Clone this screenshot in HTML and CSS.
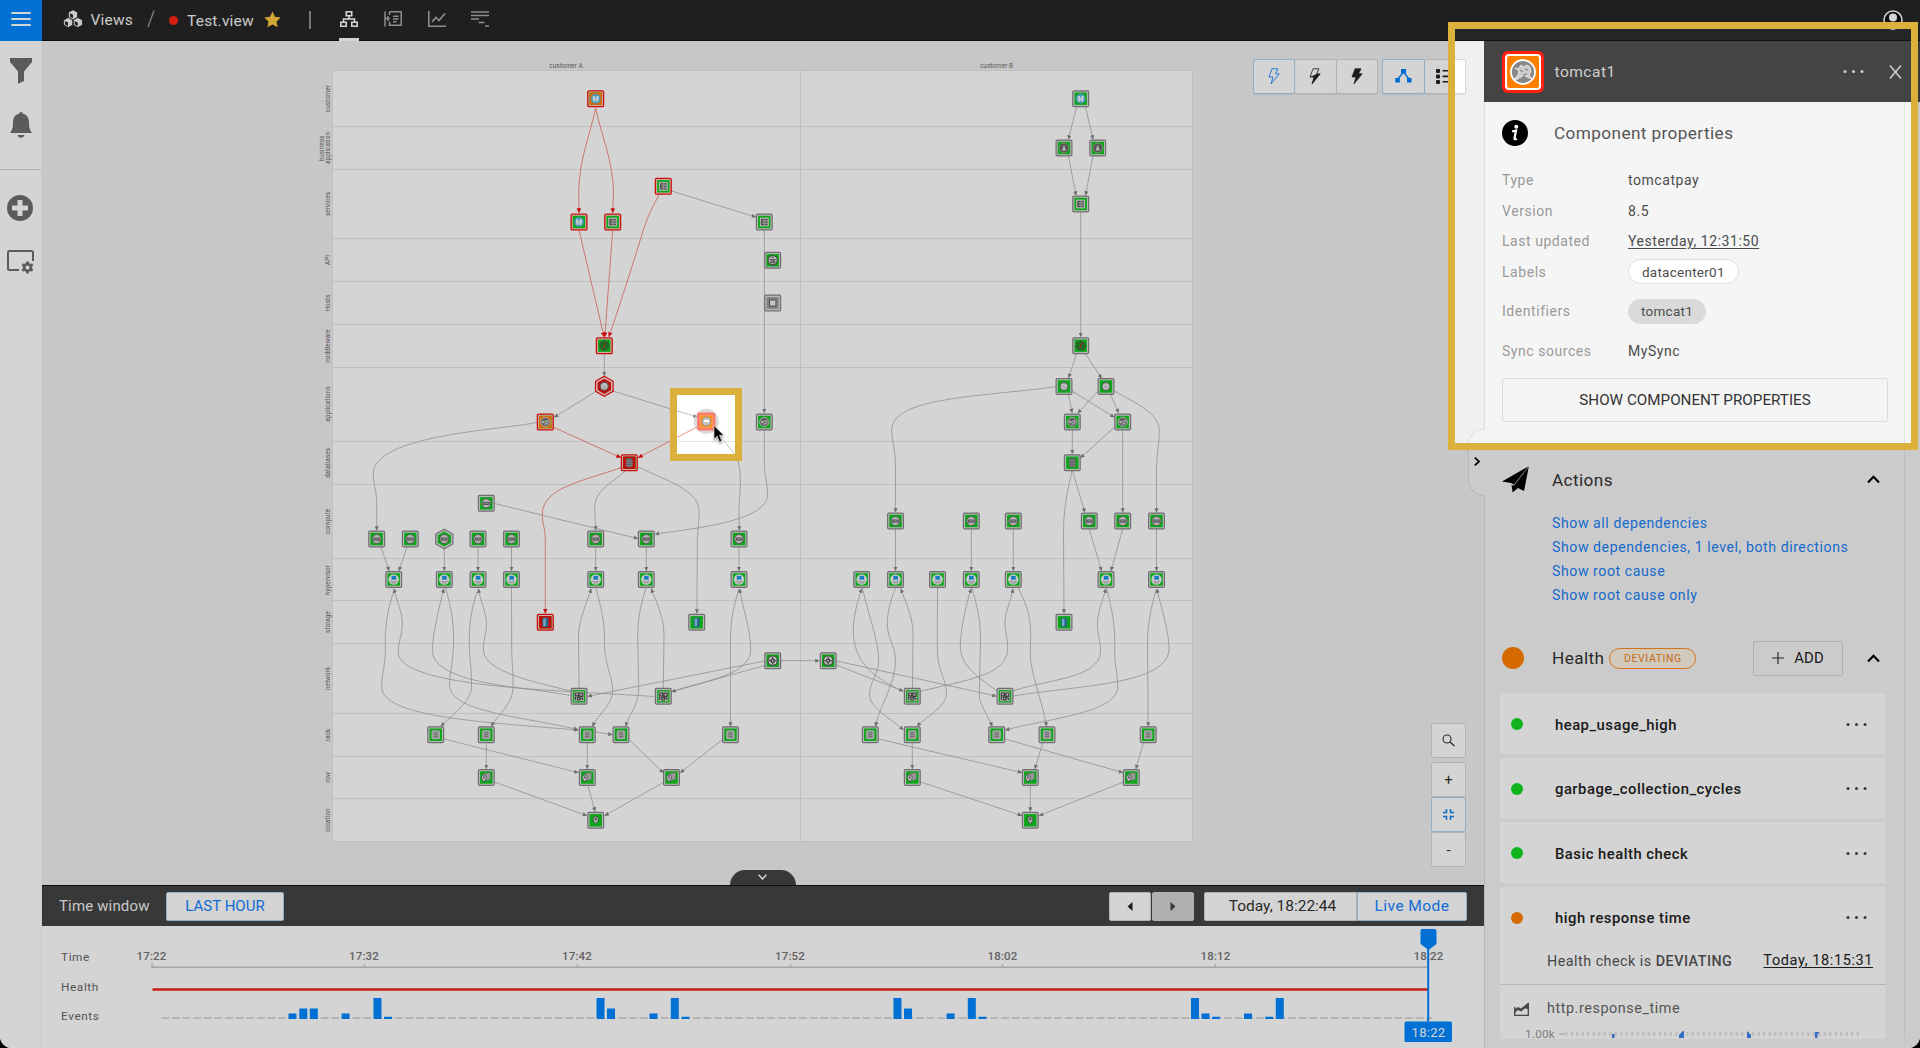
FILE: index.html
```html
<!DOCTYPE html>
<html lang="en">
<head>
<meta charset="utf-8">
<title>Test.view</title>
<link rel="stylesheet" href="styles.css">
</head>
<body>
<div class="app">
  <header class="topbar">
    <button class="menu" aria-label="Menu"><span></span><span></span><span></span></button>
    <svg class="cubes" width="20" height="20" viewBox="0 0 20 20"><g fill="#f4f4f4" stroke="#262626" stroke-width=".8" stroke-linejoin="round"><path d="M10 .8l4.600 2.500v5L10 10.900 5.400 8.300V3.300z"/><path d="M5.200 8.500l4.600 2.500v5l-4.600 2.600-4.600-2.600v-5zM14.800 8.500l4.600 2.500v5l-4.600 2.600-4.600-2.600v-5z"/></g><path d="M7 4.200l3 1.600v3.500L7 7.700zM2 12l3 1.600v3.500L2 15.500zM11.700 12l3 1.600v3.500l-3-1.600z" fill="#262626"/></svg>
    <span class="crumb">Views</span>
    <svg class="slash" width="8" height="18" viewBox="0 0 8 18"><path d="M7 .5L1 17" stroke="#999" stroke-width="1.300"/></svg>
    <i class="crit"></i>
    <span class="crumb view">Test.view</span>
    <svg class="star" width="17" height="17" viewBox="0 0 17 17"><path d="M8.500.5l2.500 5.300 5.700.7-4.200 4 1.100 5.700-5.100-2.800-5.100 2.800 1.100-5.700-4.200-4L6 5.800z" fill="#fdc840"/></svg>
    <i class="sep"></i>
    <nav class="modes">
      <a class="on"><svg width="18" height="16" viewBox="0 0 18 16" fill="none" stroke="#fff" stroke-width="1.600"><path d="M6.300.8h5.400v4H6.300zM.8 11.200h5.400v4H.8zM11.800 11.200h5.400v4h-5.400zM9 5v3M3.500 11V8h11v3"/></svg></a>
      <a><svg width="18" height="16" viewBox="0 0 18 16" fill="none" stroke="#aaa" stroke-width="1.500"><path d="M5.500.8h11.700v13.400H5.500V10.500M5.500.8V4M1 .5v15M1 7.500h5M3.800 5v5M9 5.300h5.500M9 8h5.500M9 10.700h3.500"/></svg></a>
      <a><svg width="18" height="16" viewBox="0 0 18 16" fill="none" stroke="#aaa" stroke-width="1.600"><path d="M.8 0v15.200H18M4 11l4-4.500 3 3L17 2.500"/></svg></a>
      <a><svg width="18" height="16" viewBox="0 0 18 16" fill="none" stroke="#aaa" stroke-width="1.700"><path d="M0 1h18M0 4.500h18M0 8h8M7.500 11.500h6M14 15h4"/></svg></a>
    </nav>
    <svg class="user" width="20" height="20" viewBox="0 0 20 20"><circle cx="10" cy="10" r="9" fill="#111" stroke="#fff" stroke-width="1.500"/><circle cx="10" cy="7.500" r="4" fill="#fff"/><path d="M3.500 16c1.500-3 4-3.500 6.500-3.500s5 .5 6.500 3.500c-3.500 3-9.500 3-13 0z" fill="#fff"/></svg>
  </header>

  <aside class="rail">
    <svg width="22" height="26" viewBox="0 0 22 26"><path d="M0 0h22v4L14 13.500V23l-6 2.800V13.500L0 4z"/></svg>
    <svg width="22" height="26" viewBox="0 0 22 26"><path d="M11 0c1 0 1.500.7 1.500 1.500C17 2.500 19 6 19 10c0 6 1 8.500 3 11H0c2-2.500 3-5 3-11 0-4 2-7.500 6.500-8.500C9.500.7 10 0 11 0zM7.500 23h7c-.5 1.700-1.700 2.800-3.500 2.800S8 24.700 7.500 23z"/></svg>
    <hr>
    <svg width="26" height="26" viewBox="0 0 26 26"><path fill-rule="evenodd" d="M13 0a13 13 0 100 26 13 13 0 000-26zM10.500 5h5v5.500H21v5h-5.500V21h-5v-5.500H5v-5h5.500z"/></svg>
    <svg width="27" height="24" viewBox="0 0 27 24"><path d="M12 20H2.500Q1 20 1 18.500v-16Q1 1 2.500 1h22Q26 1 26 2.500V11" fill="none" stroke="#6e6e6e" stroke-width="2"/><circle cx="20.500" cy="17.500" r="3.500" fill="none" stroke="#6e6e6e" stroke-width="2.400"/><path d="M20.500 11.500v12M15.300 14.500l10.400 6M15.300 20.500l10.400-6" stroke="#6e6e6e" stroke-width="2.600"/><circle cx="20.500" cy="17.500" r="2" fill="#fff"/></svg>
  </aside>

  <main class="canvas">
    <svg class="topology" width="1441" height="844" viewBox="42 41 1441 844">
      <defs>
        <marker id="ag" viewBox="0 0 6 6" refX="5" refY="3" markerWidth="4.600" markerHeight="4.600" markerUnits="userSpaceOnUse" orient="auto"><path d="M0 .3L6 3 0 5.700z" fill="#858585"/></marker>
        <marker id="ar" viewBox="0 0 6 6" refX="5" refY="3" markerWidth="5" markerHeight="5" markerUnits="userSpaceOnUse" orient="auto"><path d="M0 .3L6 3 0 5.700z" fill="#f01010"/></marker>
        <g id="fg"><rect x="-7.900" y="-7.900" width="15.800" height="15.800" rx="1.200" fill="#dcdcdc" stroke="#868686" stroke-width="1.200"/><rect x="-6.200" y="-6.200" width="12.400" height="12.400" fill="#0cc81c"/></g>
        <g id="fr"><rect x="-7.900" y="-7.900" width="15.800" height="15.800" rx="1.200" fill="#ffd0cc" stroke="#f0120c" stroke-width="1.300"/><rect x="-6.200" y="-6.200" width="12.400" height="12.400" fill="#0cc81c"/></g>
        <g id="people"><circle r="4.900" fill="#5cb8dc"/><path d="M-3-2.800h2.400v2.300h1.200v-2.300H3V0L2.300 3H.5V1h-1v2h-1.800L-3 0z" fill="#e8f4fa"/></g>
        <g id="grid"><rect x="-4" y="-4" width="8" height="8" fill="#aaa" stroke="#e4e4e4" stroke-width=".8"/><path d="M-2.700-2.500v5h2.400M-2.500-2.500h2M-2.500 0h2M1-2.500h2M1 0h2M1 2.500h2" stroke="#555" fill="none"/></g>
        <g id="srv"><circle r="4.500" fill="#dcdcdc" stroke="#6c6c6c" stroke-width="1"/><rect x="-3.300" y="-1.500" width="6.600" height="3.200" fill="#666"/><path d="M-2 0h4" stroke="#ccc" stroke-width=".8"/></g>
        <g id="cat"><circle r="4.700" fill="#777" stroke="#ddd" stroke-width=".8"/><path d="M-3.500-1.500l2.500 1L3-2v2.500l-1.500 2H-1L-3 1z" fill="#ddd"/><path d="M-2 1.500L2 0" stroke="#555"/></g>
        <g id="gear"><circle r="4" fill="#e4e4e4" stroke="#666" stroke-width="1"/><path d="M-1.500-.5l3 2" stroke="#999" stroke-width=".9"/></g>
        <g id="mq"><circle r="4.400" fill="#178f25" stroke="#4c5a4c" stroke-width="1.500" stroke-dasharray="3 .8"/><path d="M-1.200 2.600L1.500-2.800" stroke="#c23" stroke-width="1.200"/></g>
        <g id="db"><rect x="-3.400" y="-4.600" width="6.800" height="9.200" rx="1.800" fill="#777"/><path d="M-3.400-2h6.800M-3.400.5h6.800M-3.400 3h6.800" stroke="#aaa" stroke-width=".7"/></g>
        <g id="cyl"><rect x="-3" y="-4.600" width="6" height="9.200" rx="1.400" fill="#2f7da6"/><rect x="-2" y="-3.800" width="2.400" height="7.600" fill="#8cc8e4"/></g>
        <g id="a"><circle r="4.800" fill="#666" stroke="#aaa" stroke-width=".8"/><path d="M-1.900 2.300L0-2.800l1.900 5.100z" fill="#ddd" stroke="#ddd" stroke-width=".4"/></g>
        <g id="n-srv"><use href="#fg"/><use href="#srv"/></g>
        <g id="n-hyp"><use href="#fg"/><circle r="5.200" fill="#f4f4f4"/><path d="M-2.200-3.700h4.600v3.900h-4.600z" fill="#1c96e8"/><path d="M-3.800 1.500q3.800 2 7.600 0M-2.500 3.500h5" stroke="#aaa" stroke-width=".9" fill="none"/></g>
        <g id="n-sw"><use href="#fg"/><rect x="-4.900" y="-4.900" width="9.800" height="9.800" fill="#d4d4d4"/><path d="M-3.600-3.300h3v2.800h-3zM.8-3.300h3V0h-3zM-3.600.5V3.600M-1.500 1h2.600v2.600h-2.600zM1.800 1.800h2M3.600 1.800v2" stroke="#4c4c4c" fill="none" stroke-width="1.200"/></g>
        <g id="n-rack"><use href="#fg"/><rect x="-4.300" y="-4.500" width="8.600" height="9" rx="1.500" fill="#c4c4c4"/><path d="M-2.200-2h4.400M-2.200 0h4.400M-2.200 2h4.400" stroke="#777" stroke-width="1.100"/></g>
        <g id="n-row"><use href="#fg"/><path d="M-2.500-4l6.500-.7v6.500L-1 3.300z" fill="#b8b8b8" stroke="#8a8a8a" stroke-width=".7"/><path d="M-2.500 4.500C-4.500 2-5 1-5-.2a2.500 2.500 0 015 0C0 1-.5 2-2.500 4.500z" fill="#ddd" stroke="#555" stroke-width=".8"/><circle cx="-2.500" cy="-.2" r=".9" fill="#444"/></g>
        <g id="n-loc"><use href="#fg"/><path d="M0 4C-2.200 1.200-2.700 0-2.700-1.200a2.700 2.700 0 015.400 0C2.700 0 2.200 1.200 0 4z" fill="#ccc" stroke="#555" stroke-width=".8"/><circle cy="-1.200" r="1" fill="#444"/></g>
        <g id="n-net"><use href="#fg"/><circle r="4.700" fill="#eee" stroke="#555" stroke-width="1.200"/><path d="M-3.800 0h2.600M1.200 0h2.600M0-3.800v2.600M0 1.200v2.600M-1.400-1.400h2.800v2.800h-2.800z" stroke="#555" stroke-width="1.300" fill="none"/></g>
      </defs>
      <rect x="332.500" y="70.500" width="860" height="771" fill="#fff" stroke="#e6e6e6"/>
      <path class="lanes" d="M333 126.500H1192M333 169.500H1192M333 238.500H1192M333 281.500H1192M333 324.500H1192M333 367.500H1192M333 441.500H1192M333 484.500H1192M333 558.500H1192M333 600.500H1192M333 643.500H1192M333 713.500H1192M333 756.500H1192M333 798.500H1192M800.500 71V841"/>
      <g class="lane-names">
        <text x="566" y="68">customer A</text><text x="996.500" y="68">customer B</text>
        <text transform="translate(329.500 98.500)rotate(-90)">customer</text>
        <text transform="translate(323.500 148.500)rotate(-90)">business</text><text transform="translate(329.500 148)rotate(-90)">application</text>
        <text transform="translate(329.500 204)rotate(-90)">services</text>
        <text transform="translate(329.500 260)rotate(-90)">API</text>
        <text transform="translate(329.500 303)rotate(-90)">Hosts</text>
        <text transform="translate(329.500 346)rotate(-90)">middleware</text>
        <text transform="translate(329.500 404)rotate(-90)">applications</text>
        <text transform="translate(329.500 463)rotate(-90)">databases</text>
        <text transform="translate(329.500 521.500)rotate(-90)">compute</text>
        <text transform="translate(329.500 580)rotate(-90)">hypervisor</text>
        <text transform="translate(329.500 622)rotate(-90)">storage</text>
        <text transform="translate(329.500 678.500)rotate(-90)">network</text>
        <text transform="translate(329.500 735)rotate(-90)">rack</text>
        <text transform="translate(329.500 777.500)rotate(-90)">row</text>
        <text transform="translate(329.500 820)rotate(-90)">location</text>
      </g>

      <g class="edges bad">
        <path d="M595.700 108C590 135 579 160 578.700 192L579 212.500"/><path d="M595.700 108C601 135 613 160 613.500 192L612.700 212.500"/>
        <path d="M579 230L604 336.500"/><path d="M612.700 230L604.800 336.500"/><path d="M659 195Q649 213 645 225C637 250 625 290 609 336.500"/>
        <path d="M553 427L620.500 457.500"/><path d="M698 426.500L638.500 457.500"/>
        <path d="M621.500 467.500C580 482 543 488 542.300 514C542.300 525 545.300 528 545.300 540V613"/>
      </g>
      <g class="edges">
        <path d="M671.500 191L755.500 217"/><path d="M764.300 230V412.500"/><path d="M604.300 354V375.500"/><path d="M595 392L554.500 417"/><path d="M613 391L697 417"/>
        <path d="M537 422.500C500 430 373 435 373.300 474C373.300 486 376.700 490 376.700 503V530"/>
        <path d="M714 430L734 453C741 462 741 480 739.700 497C739 505 739 510 739.300 530"/>
        <path d="M764.300 430V463C764.300 475 767.500 480 767.500 495C767.500 520 700 528 655.500 534"/>
        <path d="M625 471C610 485 595 490 594.700 508C594.700 518 595.500 522 595.800 530"/>
        <path d="M638 467C665 480 700 490 699 512C699 525 697.300 530 697.300 545L696.900 613"/>
        <path d="M494.500 503.500L637.500 538.500"/>
        <path d="M381 547L389 570.500"/><path d="M407 547L399 570.500"/><path d="M444.300 549V570.500"/><path d="M478 547V570.500"/><path d="M511.500 547V570.500"/><path d="M595.700 547V570.500"/><path d="M646.300 547V570.500"/><path d="M739 547V570.500"/>
        <path d="M393.500 592C386 615 385 630 385.300 650C385.500 665 381.500 675 381.700 687C382 717 480 722 578 730"/><path d="M595.700 732L612 734.700"/>
        <path d="M654 696.500C560 690 398 688 398.300 652C398.500 640 402.500 635 402.300 622C402 612 397 602 394 589"/>
        <path d="M570.500 695.500C530 687 432 685 432.300 650C433 630 440 605 443.700 589"/>
        <path d="M445.500 588C452 610 454 625 453.500 645C453 665 449.500 672 449.500 685C450 712 520 716 577.500 729.500"/>
        <path d="M477 592C471 610 469 625 469.300 645C469.700 660 471.700 668 471.500 688C471 700 455 713 441 726"/>
        <path d="M570.500 691C535 682 484 672 483.300 650C483 640 486.800 635 486.500 622C486 612 480 600 478.500 589"/>
        <path d="M511.500 588L511.700 650C512 665 513.500 675 513 688C512 705 500 712 491.500 726"/>
        <path d="M579 688L578.500 635C578.500 620 588 600 591 589"/>
        <path d="M596 588C600 605 605 620 604.500 640C604 665 612.500 675 612.700 690C612.700 705 600 712 592.500 726"/>
        <path d="M646 588C641 605 638 615 637.700 635L638.700 690C638 705 629 715 625.700 726"/>
        <path d="M663.300 688L664 635C664 615 655 600 651.500 589"/>
        <path d="M738.500 590C733 610 730.500 620 730.500 640V726"/>
        <path d="M672 691.500C705 681 750 675 750.700 650C751 630 743 610 739.500 589"/>
        <path d="M764.500 661L588 696.300"/><path d="M764.500 665.500L672 691.500"/><path d="M781 660.700H819"/>
        <path d="M444 739L578 772.500"/><path d="M486.300 743V768.500"/><path d="M587.300 743V768.500"/><path d="M629.500 740L663 772.500"/><path d="M722 740L680.500 772.500"/>
        <path d="M494.500 782L586.500 815.500"/><path d="M588 786L595 811"/><path d="M663.300 782.500L605 815.500"/>

        <path d="M1076.500 107L1068.500 139"/><path d="M1085.500 107L1093 139"/><path d="M1068.500 156L1076 195"/><path d="M1093 156L1085.500 195"/><path d="M1080.700 212V336.500"/><path d="M1076.500 354L1068.700 377.500"/><path d="M1085.500 354L1101.500 378"/>
        <path d="M1056 386.700C980 397 892 397 891.700 430C892 443 895.500 450 895.500 465V512"/>
        <path d="M1068.500 394.500L1072 412.500"/><path d="M1072 391L1114 417"/><path d="M1098 391L1078 413"/><path d="M1110.500 394.500L1118.500 412.500"/>
        <path d="M1114.500 391C1135 403 1158 412 1159.300 430C1159.500 443 1156.500 455 1156.500 468V512"/>
        <path d="M1072.300 430V453.500"/><path d="M1114.500 427L1081 457.500"/><path d="M1122.700 430V512"/><path d="M1072.500 471L1084.700 512"/>
        <path d="M1072 471C1068 490 1063.500 505 1063.500 535L1064 613"/>
        <path d="M895.500 529V570.500"/><path d="M971.300 529V570.500"/><path d="M1013.300 529V570.500"/><path d="M1089.300 529L1101.500 570.500"/><path d="M1122.700 529L1111 570.500"/><path d="M1156.500 529V570.500"/>
        <path d="M902.500 691C870 676 853.300 660 853.300 630C853.500 615 858 600 861.500 589"/>
        <path d="M862.500 588C868 615 879 640 878.700 662C878 675 869.500 682 869.500 695C870 708 890 718 903 729.500"/>
        <path d="M895.500 588C891 600 887 612 887.300 625C888 640 895.500 645 895.500 662C895 685 880 705 875.500 726"/>
        <path d="M912.500 688L913 635C913 615 905 602 901 589"/>
        <path d="M937.500 588L937.300 650C937.500 670 946.500 680 946.500 693C946 708 925 717 917.500 726"/>
        <path d="M997 691C975 675 960 665 960.300 645C961 625 967 602 971 589"/>
        <path d="M972 588C978 610 980.500 620 980.500 640L979.300 695C979.500 705 988 715 992 726"/>
        <path d="M920.700 691.300C965 680 1006 676 1007.700 650C1008 638 1004.500 632 1005 620C1006 610 1011 600 1013 589"/>
        <path d="M1018.500 588C1026 605 1031 615 1030.700 635L1030.300 655C1031 675 1042 700 1046.500 726"/>
        <path d="M1013.300 690.700C1050 679 1099 678 1100.500 652C1101 640 1097 635 1097.500 622C1098 610 1103 600 1105.700 589"/>
        <path d="M1106.700 588C1112 610 1115 625 1114.800 645C1114 665 1117.700 672 1117.700 687C1117 713 1050 718 1005.700 730"/>
        <path d="M1156 590C1150 612 1147.500 625 1147.500 645L1148.200 726"/>
        <path d="M1013.300 696C1080 685 1169 685 1169.200 648C1168 625 1160 605 1157 589"/>
        <path d="M836.500 665L903 691"/><path d="M836.500 661L996 696"/>
        <path d="M878.500 739L1021.500 772.500"/><path d="M912.300 743V768.500"/><path d="M1005 739L1122.500 772.500"/><path d="M1042.700 743L1035 768.500"/><path d="M1143.500 743L1136 768.500"/>
        <path d="M920.500 782L1021.500 815.500"/><path d="M1030.300 786V811"/><path d="M1123.500 782L1039.500 815.500"/>
      </g>

      <g class="nodes">
        <use href="#fr" x="595.700" y="98.700"/><path d="M589.500 92.500h12.400v12.400h-12.400z" fill="#ff8000"/><use href="#people" x="595.700" y="98.700"/>
        <use href="#fr" x="579" y="222"/><use href="#people" x="579" y="222"/>
        <use href="#fr" x="612.700" y="222"/><use href="#grid" x="612.700" y="222"/>
        <use href="#fr" x="663.300" y="186.300"/><use href="#grid" x="663.300" y="186.300"/>
        <use href="#fg" x="764.300" y="222"/><use href="#grid" x="764.300" y="222"/>
        <use href="#fg" x="772.700" y="260.300"/><g transform="translate(772.700 260.300)"><circle r="4.600" fill="#eee" stroke="#555" stroke-width="1.200"/><path d="M-3-.8h6M-2 .5h1.500v2.200H-2zM.7.500h1.500v2.200H.7zM-1-2.800h2" stroke="#555" fill="none"/></g>
        <g transform="translate(772.700 303)"><rect x="-7.900" y="-7.900" width="15.800" height="15.800" rx="1" fill="#dcdcdc" stroke="#868686" stroke-width="1.200"/><rect x="-5.900" y="-5.900" width="11.800" height="11.800" fill="#999"/><rect x="-3.200" y="-3" width="6.400" height="6" fill="#eee" stroke="#666"/></g>
        <use href="#fr" x="604.300" y="345.700"/><use href="#mq" x="604.300" y="345.700"/>
        <g transform="translate(604.300 386.300)"><path d="M0-10l8.800 5V5L0 10-8.800 5V-5z" fill="#ffd8d4" stroke="#f0120c" stroke-width="1.200"/><path d="M0-7.600l6.700 3.800v7.600L0 7.600-6.700 3.800v-7.600z" fill="#e01414"/></g><use href="#gear" x="604.300" y="386.300"/>
        <use href="#fr" x="545.300" y="422"/><path d="M539.100 415.800h12.400v12.400h-12.400z" fill="#ff8000"/><use href="#cat" x="545.300" y="422"/>
        <circle cx="706.300" cy="421.300" r="12.500" fill="#bbb" opacity=".55"/>
        <rect x="698.300" y="413.500" width="16" height="16" rx="1.500" fill="#ff9a6a" stroke="#ff7568" stroke-width="2.200"/><path d="M700.500 415.700h11.600v11.600h-11.600z" fill="#ff9420"/><circle cx="706.300" cy="421.500" r="4.400" fill="#c4c4c4" stroke="#909090"/><path d="M704 421h5" stroke="#fff" stroke-width="2"/>
        <use href="#fg" x="764.300" y="422"/><use href="#cat" x="764.300" y="422"/>
        <use href="#fr" x="629.300" y="462.700"/><path d="M623.100 456.500h12.400v12.400h-12.400z" fill="#e80c0c"/><use href="#db" x="629.300" y="462.700"/>
        <use href="#n-srv" x="486.300" y="503.300"/><use href="#n-srv" x="376.700" y="539"/><use href="#n-srv" x="410.300" y="539"/>
        <g transform="translate(444.300 539)"><path d="M0-9.800l8.600 4.900v9.800L0 9.800-8.600 4.900v-9.800z" fill="#dcdcdc" stroke="#868686" stroke-width="1.200"/><path d="M0-7.600l6.600 3.800v7.600L0 7.600-6.600 3.800v-7.600z" fill="#0cc81c"/></g><use href="#srv" x="444.300" y="539"/>
        <use href="#n-srv" x="478" y="539"/><use href="#n-srv" x="511.500" y="539"/><use href="#n-srv" x="595.700" y="539"/><use href="#n-srv" x="646.300" y="539"/><use href="#n-srv" x="739" y="539"/>
        <use href="#n-hyp" x="393.700" y="579.500"/><use href="#n-hyp" x="444.300" y="579.500"/><use href="#n-hyp" x="478" y="579.500"/><use href="#n-hyp" x="511.500" y="579.500"/><use href="#n-hyp" x="595.700" y="579.500"/><use href="#n-hyp" x="646.300" y="579.500"/><use href="#n-hyp" x="739" y="579.500"/>
        <use href="#fr" x="545.300" y="622.300"/><path d="M539.100 616.100h12.400v12.400h-12.400z" fill="#e80c0c"/><use href="#cyl" x="545.300" y="622.300"/>
        <use href="#fg" x="696.700" y="622.300"/><use href="#cyl" x="696.700" y="622.300"/>
        <use href="#n-net" x="772.700" y="660.700"/><use href="#n-sw" x="579" y="696.300"/><use href="#n-sw" x="663.300" y="696.300"/>
        <use href="#n-rack" x="435.700" y="734.700"/><use href="#n-rack" x="486.300" y="734.700"/><use href="#n-rack" x="587.300" y="734.700"/><use href="#n-rack" x="621" y="734.700"/><use href="#n-rack" x="730.500" y="734.700"/>
        <use href="#n-row" x="486.300" y="777.500"/><use href="#n-row" x="587.300" y="777.500"/><use href="#n-row" x="671.500" y="777.500"/><use href="#n-loc" x="595.700" y="820.300"/>

        <use href="#fg" x="1080.700" y="98.700"/><use href="#people" x="1080.700" y="98.700"/>
        <use href="#fg" x="1064" y="148"/><use href="#a" x="1064" y="148"/><use href="#fg" x="1097.700" y="148"/><use href="#a" x="1097.700" y="148"/>
        <use href="#fg" x="1080.700" y="204"/><use href="#grid" x="1080.700" y="204"/>
        <use href="#fg" x="1080.700" y="345.700"/><use href="#mq" x="1080.700" y="345.700"/>
        <use href="#fg" x="1064" y="386.500"/><use href="#gear" x="1064" y="386.500"/><use href="#fg" x="1106" y="386.500"/><use href="#gear" x="1106" y="386.500"/>
        <use href="#fg" x="1072.300" y="422"/><use href="#cat" x="1072.300" y="422"/><use href="#fg" x="1122.700" y="422"/><use href="#cat" x="1122.700" y="422"/>
        <use href="#fg" x="1072.300" y="462.700"/><use href="#db" x="1072.300" y="462.700"/>
        <use href="#n-srv" x="895.500" y="521"/><use href="#n-srv" x="971.300" y="521"/><use href="#n-srv" x="1013.300" y="521"/><use href="#n-srv" x="1089.300" y="521"/><use href="#n-srv" x="1122.700" y="521"/><use href="#n-srv" x="1156.500" y="521"/>
        <use href="#n-hyp" x="861.700" y="579.500"/><use href="#n-hyp" x="895.500" y="579.500"/><use href="#n-hyp" x="937.500" y="579.500"/><use href="#n-hyp" x="971.300" y="579.500"/><use href="#n-hyp" x="1013.300" y="579.500"/><use href="#n-hyp" x="1106" y="579.500"/><use href="#n-hyp" x="1156.500" y="579.500"/>
        <use href="#fg" x="1064" y="622.300"/><use href="#cyl" x="1064" y="622.300"/>
        <use href="#n-net" x="828.200" y="660.700"/><use href="#n-sw" x="912.300" y="696.300"/><use href="#n-sw" x="1005" y="696.300"/>
        <use href="#n-rack" x="870.300" y="734.700"/><use href="#n-rack" x="912.300" y="734.700"/><use href="#n-rack" x="996.700" y="734.700"/><use href="#n-rack" x="1047" y="734.700"/><use href="#n-rack" x="1148.200" y="734.700"/>
        <use href="#n-row" x="912.300" y="777.500"/><use href="#n-row" x="1030.300" y="777.500"/><use href="#n-row" x="1131.300" y="777.500"/><use href="#n-loc" x="1030.300" y="820.300"/>
      </g>
    </svg>

    <div class="tools">
      <div class="group">
        <button class="sel"><svg width="12" height="17" viewBox="0 0 12 17"><path d="M4 .8h6L7.500 5.800h3.700L3 16l2-7H1z" fill="none" stroke="#1c84ff" stroke-width=".9"/></svg></button>
        <button><svg width="12" height="17" viewBox="0 0 12 17"><path d="M4 .8h6L7.500 5.800h3.700L3 16l2-7H1z" fill="none" stroke="#222" stroke-width=".8"/><path d="M1 9l6.500-3h3.700L3 16l2-7z" fill="#222"/></svg></button>
        <button><svg width="12" height="17" viewBox="0 0 12 17"><path d="M4 .8h6L7.500 5.800h3.700L3 16l2-7H1z" fill="#222" stroke="#222" stroke-width=".7"/></svg></button>
      </div>
      <div class="group">
        <button class="sel"><svg width="17" height="14" viewBox="0 0 17 14"><path d="M6 0h5v4.500H6zM.3 9h4.500v4.500H.3zM12 9h4.500v4.500H12z" fill="#0080ff"/><path d="M8.500 3L2.500 10.500M8.500 3l6 7.500" stroke="#0080ff" stroke-width="1.300"/></svg></button>
        <button><svg width="17" height="15" viewBox="0 0 17 15" fill="#222"><rect width="4" height="4" rx="1"/><rect y="5.500" width="4" height="4" rx="1"/><rect y="11" width="4" height="4" rx="1"/><path d="M6.500 1h10v1.600h-10zM6.500 6.600h10v1.600h-10zM6.500 12h10v1.600h-10z"/></svg></button>
      </div>
    </div>
    <div class="zoomer">
      <button class="find"><svg width="13" height="13" viewBox="0 0 13 13"><circle cx="5" cy="5" r="4" fill="none" stroke="#333" stroke-width="1.100"/><path d="M8 8l4.500 4" stroke="#333" stroke-width="1.300"/></svg></button>
      <button>+</button>
      <button class="sel"><svg width="11" height="11" viewBox="0 0 11 11"><path d="M0 3.500h3.500V0M7.500 0v3.500H11M0 7.500h3.500V11M7.500 11V7.500H11" fill="none" stroke="#1080f0" stroke-width="1.500"/></svg></button>
      <button>-</button>
    </div>
    <div class="collapse"><svg width="9" height="6" viewBox="0 0 9 6"><path d="M.7.700L4.500 5 8.300.7" fill="none" stroke="#fff" stroke-width="1.500"/></svg></div>
    <svg class="cursor" width="12" height="18" viewBox="0 0 12 18"><path d="M1 .5v13.700l3.200-3 2.300 5.800 2.400-1-2.400-5.600H11z" fill="#000" stroke="#fff" stroke-width=".6"/></svg>
  </main>

  <section class="timebar">
    <span class="tw">Time window</span>
    <button class="hour">LAST HOUR</button>
    <div class="step"><button><svg width="6" height="9" viewBox="0 0 6 9"><path d="M5.500 0v9L.5 4.500z" fill="#222"/></svg></button><button class="off"><svg width="6" height="9" viewBox="0 0 6 9"><path d="M.5 0v9l5-4.500z" fill="#444"/></svg></button></div>
    <div class="now"><button class="date">Today, 18:22:44</button><button class="live">Live Mode</button></div>
  </section>
  <section class="timeline">
    <svg width="1441" height="122" viewBox="42 926 1441 122">
      <g class="tl-name"><text x="61" y="961">Time</text><text x="61" y="990.500">Health</text><text x="61" y="1020">Events</text></g>
      <g class="tl-tick"><text x="151.500" y="960">17:22</text><text x="364" y="960">17:32</text><text x="577" y="960">17:42</text><text x="790" y="960">17:52</text><text x="1002.500" y="960">18:02</text><text x="1215.500" y="960">18:12</text><text x="1428.500" y="960">18:22</text></g>
      <path d="M152 963v4.300H1428M364.500 967v-3M577.500 967v-3M790.500 967v-3M1002.500 967v-3M1215.500 967v-3" fill="none" stroke="#c8c8c8" stroke-width="1.400"/>
      <path d="M152.500 989.500H1428" stroke="#ee2418" stroke-width="2.500"/>
      <path d="M161.300 1018H1432" stroke="#dadada" stroke-width="2" stroke-dasharray="7.800 2.830"/>
      <path fill="#0087ff" d="M288.500 1019v-5.500h8v5.500zM299.300 1019v-10.500h8v10.500zM309.800 1019v-10.500h8v10.500zM341.600 1019v-5.500h8v5.500zM373.500 1019v-21h8v21zM384 1019v-2.200h8v2.200zM596.500 1019v-21h8v21zM607 1019v-10.500h8v10.500zM649.500 1019v-5.500h8v5.500zM670.800 1019v-21h8v21zM681.500 1019v-2.200h8v2.200zM893.500 1019v-21h8v21zM904 1019v-10.500h8v10.500zM946.500 1019v-5.500h8v5.500zM967.800 1019v-21h8v21zM978.500 1019v-2.200h8v2.200zM1191 1019v-21h8v21zM1201.500 1019v-5.500h8v5.500zM1212 1019v-2.200h8v2.200zM1244 1019v-5.500h8v5.500zM1265.200 1019v-2.200h8v2.200zM1275.800 1019v-21h8v21z"/>
      <path d="M1422 929h12.500q2 0 2 2v13l-8 6-8-6v-13q0-2 1.500-2z" fill="#0087ff"/><path d="M1428.200 948v75" stroke="#0087ff" stroke-width="2"/>
      <rect x="1404.500" y="1021.500" width="47.500" height="20.500" rx="1.500" fill="#0087ff"/><text class="pin" x="1428.500" y="1036.500">18:22</text>
    </svg>
  </section>

  <aside class="details">
    <div class="grip"><svg width="6" height="9" viewBox="0 0 6 9"><path d="M.8.700L5 4.500.8 8.300" fill="none" stroke="#000" stroke-width="1.700"/></svg></div>
    <div class="d-head">
      <svg width="42" height="42" viewBox="0 0 42 42"><rect width="42" height="42" rx="6" fill="#ff2010"/><rect x="4" y="4" width="34" height="34" rx="3" fill="#ff8000" stroke="#fff" stroke-width="2"/><circle cx="21" cy="21" r="12" fill="#888" stroke="#fff" stroke-width="1.800"/><path d="M13 17l3 1 3-4 3 2 3-2 3 2 1 5-2 3 3 4-5-2-3-2-3 2-5 3-2-1 4-4 1-4z" fill="#ccc" stroke="#f4f4f4" stroke-width=".8"/><path d="M18 19l3 2M23 18l3 1M21 24l4-1" stroke="#777" stroke-width="1"/></svg>
      <span>tomcat1</span>
      <i class="dots"></i>
      <svg class="close" width="13" height="14" viewBox="0 0 13 14"><path d="M1 .5l11 13M12 .5L1 13.500" stroke="#d4d4d4" stroke-width="1.400"/></svg>
    </div>
    <div class="d-body">
      <div class="title props-title"><svg width="26" height="26" viewBox="0 0 26 26"><circle cx="13" cy="13" r="13"/><circle cx="14.300" cy="6.800" r="2" fill="#fff"/><path d="M10 11.500l4-1-1.600 8q0 1.300 2.300.2" fill="none" stroke="#fff" stroke-width="2.200"/></svg><h2>Component properties</h2></div>
      <dl class="props">
        <dt>Type</dt><dd>tomcatpay</dd>
        <dt>Version</dt><dd>8.5</dd>
        <dt>Last updated</dt><dd><u>Yesterday, 12:31:50</u></dd>
        <dt>Labels</dt><dd><span class="tag">datacenter01</span></dd>
        <dt>Identifiers</dt><dd><span class="tag id">tomcat1</span></dd>
        <dt>Sync sources</dt><dd>MySync</dd>
      </dl>
      <button class="show">SHOW COMPONENT PROPERTIES</button>
      <div class="title acts-title"><svg width="27" height="27" viewBox="0 0 27 27"><path d="M0 15.500L26.500.3 12 18.500 9 17zM12 19.500L26.800.8 22 25l-6-3-5.300 4.500L9.500 19z"/></svg><h2>Actions</h2><svg class="chev" width="13" height="9" viewBox="0 0 13 9"><path d="M1 7.500l5.500-5.700L12 7.500" fill="none" stroke="#000" stroke-width="2.200"/></svg></div>
      <ul class="links"><li>Show all dependencies</li><li>Show dependencies, 1 level, both directions</li><li>Show root cause</li><li>Show root cause only</li></ul>
      <div class="title health-title"><i class="state"></i><h2>Health</h2><span class="badge">DEVIATING</span><button class="add"><svg width="12" height="14" viewBox="0 0 12 14"><path d="M6 1v12M0 7h12" stroke="#333" stroke-width="1.200"/></svg>ADD</button><svg class="chev" width="13" height="9" viewBox="0 0 13 9"><path d="M1 7.500l5.500-5.700L12 7.500" fill="none" stroke="#000" stroke-width="2.200"/></svg></div>
      <div class="cards">
        <div class="card"><i></i><b>heap_usage_high</b><i class="dots"></i></div>
        <div class="card"><i></i><b>garbage_collection_cycles</b><i class="dots"></i></div>
        <div class="card"><i></i><b>Basic health check</b><i class="dots"></i></div>
        <div class="big">
          <div class="card dev"><i></i><b>high response time</b><i class="dots"></i></div>
          <div class="msg"><span>Health check is <strong>DEVIATING</strong></span><u>Today, 18:15:31</u></div>
          <div class="metric"><svg width="15" height="14" viewBox="0 0 15 14"><path d="M.7 5v8.300h13.600V1" fill="none" stroke="#555" stroke-width="1.300"/><path d="M1 7l3-2 3 1.500L14.500.5V7l-4-.5-3 3-4-1.500L1 11z" fill="#555"/></svg><span>http.response_time</span></div>
          <div class="chart"><span>1.00k</span><svg width="304" height="8" viewBox="0 0 304 8"><path d="M0 4h6" stroke="#bbb"/><path d="M6 3h294M6 5h294" stroke="#ccc" stroke-dasharray="2.500 3"/><path d="M53 4h2.500v4H53zM120 5l4-4h1v7h-5zM188 1l4 4v3h-4zM256 2h4v1.500h-1.500V8H256z" fill="#3c84f0"/></svg></div>
        </div>
      </div>
    </div>
  </aside>
  <div class="dim"></div>
  <div class="focus focus-node"></div>
  <div class="focus focus-panel"></div>
</div>
</body>
</html>
```
FILE: styles.css
```css
* { box-sizing: border-box; }
body { margin: 0; background: #000; font-family: Roboto, "Liberation Sans", sans-serif; color: #333; }
button { font: inherit; color: inherit; background: #fff; border: 1px solid #d8d8d8; border-radius: 2px; padding: 0; display: flex; align-items: center; justify-content: center; }
svg { display: block; flex: none; }
h2, dl, dd, ul { margin: 0; padding: 0; }
.app {
  position: relative; width: 1920px; height: 1048px; overflow: hidden;
  border-radius: 0 0 12px 12px; background: #fff;
  display: grid; grid-template: 41px 844px 41px 122px / 42px 1442px 436px;
}

/* top bar */
.topbar { grid-column: 1 / 4; background: #262626; color: #f2f2f2; display: flex; align-items: center; padding-bottom: 3px; border-bottom: 1px solid #111; }
.menu { width: 42px; height: 41px; margin-bottom: -4px; background: #0087ff; border: 0; border-radius: 0; flex-direction: column; gap: 3.500px; padding-bottom: 3px; }
.menu span { width: 20px; height: 2.500px; background: #fff; border-radius: 1px; }
.cubes { margin-left: 21px; }
.crumb { margin-left: 7.500px; font-size: 15.500px; letter-spacing: .2px; line-height: 20px; padding-top: 2px; }
.slash { margin-left: 14px; }
.crit { width: 9px; height: 9px; border-radius: 50%; background: #ff2414; margin: 4px 0 0 14px; }
.view { margin-left: 9px; padding-top: 4px; }
.star { margin-left: 10.500px; margin-top: 2px; }
.sep { width: 2px; height: 18px; background: #909090; margin: 3px 0 0 28px; }
.modes { display: flex; gap: 23.500px; margin-left: 27.500px; align-self: stretch; }
.modes a { width: 20.300px; display: flex; justify-content: center; align-items: center; margin-bottom: -4px; border-bottom: 3px solid transparent; }
.modes .on { border-color: #fff; }
.user { margin-left: auto; margin-right: 17px; margin-top: 2px; }

/* left rail */
.rail { grid-row: 2 / 5; background: #fff; border-right: 1px solid #f2f2f2; display: flex; flex-direction: column; align-items: center; padding-top: 17px; fill: #6e6e6e; }
.rail svg + svg { margin-top: 28px; }
.rail hr { width: 100%; border: 0; border-top: 1px solid #d4d4d4; margin: 31px 0 25px; }
.rail hr + svg { margin-left: -2px; }
.rail hr + svg + svg { margin-top: 29px; margin-left: -1px; }

/* topology canvas */
.canvas { position: relative; background: #f0f0f0; }
.lanes { stroke: #e6e6e6; fill: none; }
.lane-names { font-size: 6.400px; fill: #6a6a6a; text-anchor: middle; letter-spacing: .05px; }
.edges path { fill: none; stroke: #aaa; stroke-width: .75; marker-end: url(#ag); }
.edges.bad path { stroke: #f4726a; stroke-width: .8; marker-end: url(#ar); }
.tools { position: absolute; top: 18px; left: 1211px; display: flex; gap: 4.500px; }
.group { display: flex; }
.group button { width: 42.300px; height: 34.500px; margin-right: -1px; box-shadow: 0 1px 1px #ddd; }
.group button:last-child { margin-right: 0; }
button.sel { border-color: #a8d4f0; position: relative; }
.zoomer { position: absolute; top: 682px; left: 1389px; width: 35px; display: flex; flex-direction: column; font-size: 15px; }
.zoomer button { height: 35px; }
.zoomer .find { margin-bottom: 4px; }
.collapse { position: absolute; left: 688px; bottom: 0; width: 66px; height: 15px; border-radius: 18px 18px 0 0; background: #444; display: flex; justify-content: center; padding: 4px 2px 0 0; }
.cursor { position: absolute; left: 671px; top: 384px; filter: drop-shadow(0 2px 1px rgba(0,0,0,.35)); }

/* time window */
.timebar { grid-area: 3 / 2; background: #444; border-top: 1.500px solid #111; color: #eee; display: flex; align-items: center; padding: 0 17px; font-size: 15px; letter-spacing: .15px; }
.timebar button { height: 29px; }
.tw { width: 107px; }
.hour { width: 118px; color: #1383ff; border-color: #a8d4f0; }
.step { display: flex; gap: 1.500px; margin-left: auto; margin-right: 10px; }
.step button { width: 42px; }
.step .off { background: #d4d4d4; border-color: #d4d4d4; }
.now { display: flex; color: #333; font-size: 15.500px; letter-spacing: .6px; }
.now .date { width: 153px; border-radius: 2px 0 0 2px; padding-left: 4px; }
.now .live { width: 110px; color: #1383ff; border-color: #a8d4f0; border-radius: 0 2px 2px 0; letter-spacing: .45px; }
.timeline { grid-area: 4 / 2; background: #fff; }
.tl-name { font-size: 11.800px; letter-spacing: .6px; fill: #666; }
.tl-tick { font-size: 11.500px; letter-spacing: .2px; fill: #777; text-anchor: middle; font-weight: 500; }
.pin { font-size: 13px; fill: #fff; text-anchor: middle; letter-spacing: .3px; }

/* details panel */
.details { grid-area: 2 / 3 / 5; position: relative; background: #f5f5f5; display: flex; flex-direction: column; border-left: 1px solid #ddd; padding-bottom: 10px; }
.grip { position: absolute; left: -17px; top: 388px; width: 17px; height: 67px; border: 1px solid #dcdcdc; border-right: 0; border-radius: 16px 0 0 16px; background: #f5f5f5; display: flex; align-items: center; justify-content: center; padding-bottom: 3px; }
.d-head { flex: none; height: 61px; margin-left: -1px; background: #444; color: #d0d0d0; display: flex; align-items: center; padding-left: 17.500px; font-size: 15.500px; letter-spacing: .5px; }
.d-head span { margin-left: 11px; padding-top: 1px; }
.dots { width: 3px; height: 3px; border-radius: 50%; background: currentColor; box-shadow: -8.500px 0, 8.500px 0; margin-left: auto; }
.d-head .dots { margin-right: 34px; }
.close { margin-right: 18px; }
.d-body { flex: 1; min-height: 0; width: 420px; border-right: 1px solid #e4e4e4; padding: 0 17px; }
.title { display: flex; align-items: center; }
.title h2 { font-size: 17.200px; font-weight: 400; letter-spacing: .4px; color: #333; }
.props-title { height: 61px; gap: 26px; }
.props-title h2 { color: #555; }
.props { display: grid; grid-template-columns: 126px 1fr; grid-template-rows: 30.500px 30.500px 30.500px 30.500px 48px 31px; align-items: center; margin-top: 2px; font-size: 14px; letter-spacing: .55px; color: #4c4c4c; }
.props dt { color: #999; }
.props u, .msg u { text-underline-offset: 2px; }
.tag { display: inline-flex; align-items: center; height: 25px; padding: 0 13px; border-radius: 13px; border: 1px solid #e0e0e0; background: #fff; font-size: 13.500px; letter-spacing: .25px; vertical-align: middle; }
.tag.id { background: #dadada; border-color: #dadada; padding: 0 12px; }
.show { width: 386px; height: 44px; margin-top: 12px; background: #f5f5f5; border-color: #dcdcdc; font-size: 15.200px; color: #333; letter-spacing: .02px; }
.acts-title { margin-top: 43px; height: 29px; }
.acts-title h2 { margin-left: 23px; }
.chev { margin-left: auto; margin-right: 7px; }
.links { list-style: none; margin: 17px 0 0 50px; font-size: 14.100px; line-height: 24.100px; letter-spacing: .57px; color: #1a80f4; }
.health-title { margin-top: 32.500px; height: 37px; }
.state { width: 22px; height: 22px; border-radius: 50%; background: #ff8000; }
.health-title h2 { margin-left: 28px; }
.badge { margin-left: 5px; width: 87px; height: 21px; border: 1px solid #ff8a1c; border-radius: 11px; background: #fdf2e4; color: #f0821c; font-size: 10.500px; letter-spacing: .6px; display: flex; align-items: center; justify-content: center; padding-top: 1px; }
.add { width: 90px; height: 35px; margin-left: auto; gap: 10px; background: #f5f5f5; border-color: #d4d4d4; font-size: 14.800px; letter-spacing: .2px; color: #222; }
.add + .chev { margin-left: 24px; }
.cards { margin: 16.500px 0 0 -2px; width: 386px; display: flex; flex-direction: column; gap: 3.500px; height: 345.500px; overflow: hidden; }
.card { flex: none; height: 61px; background: #fff; border-radius: 2px; display: flex; align-items: center; padding: 1px 22px 0 11px; color: #444; }
.card i:first-child { width: 12px; height: 12px; border-radius: 50%; background: #14d822; }
.card.dev i:first-child { background: #ff8000; }
.card b { font-weight: 500; font-size: 14.800px; letter-spacing: .5px; color: #222; margin-left: 32px; padding-top: 1px; }
.card .dots { margin-right: 6.500px; }
.big { flex: none; height: 152px; background: #fff; border-radius: 2px; overflow: hidden; }
.msg { height: 37px; display: flex; justify-content: space-between; align-items: center; padding: 0 13px 10px 47px; border-bottom: 1px solid #dcdcdc; font-size: 14.300px; letter-spacing: .5px; color: #555; }
.msg u { color: #222; font-size: 14.500px; letter-spacing: .6px; }
.msg strong { font-weight: 500; }
.metric { height: 48px; display: flex; align-items: center; padding-left: 14px; gap: 18px; font-size: 14.400px; letter-spacing: .55px; color: #666; }
.chart { display: flex; padding-left: 25px; margin-top: -6px; font-size: 11.800px; letter-spacing: .2px; color: #999; gap: 4px; line-height: 14px; }
.chart svg { margin-top: 3px; }

/* focus overlay */
.dim { position: absolute; inset: 0; background: rgba(0,0,0,.17); clip-path: path(evenodd, "M0 0H1920V1048H0ZM1455 29H1911V444H1455ZM676 394H736V455H676Z"); }
.focus { position: absolute; border: 7px solid #dcb03c; }
.focus-node { left: 670px; top: 388px; width: 72px; height: 73px; }
.focus-panel { left: 1448px; top: 22px; width: 470px; height: 428px; }
```
